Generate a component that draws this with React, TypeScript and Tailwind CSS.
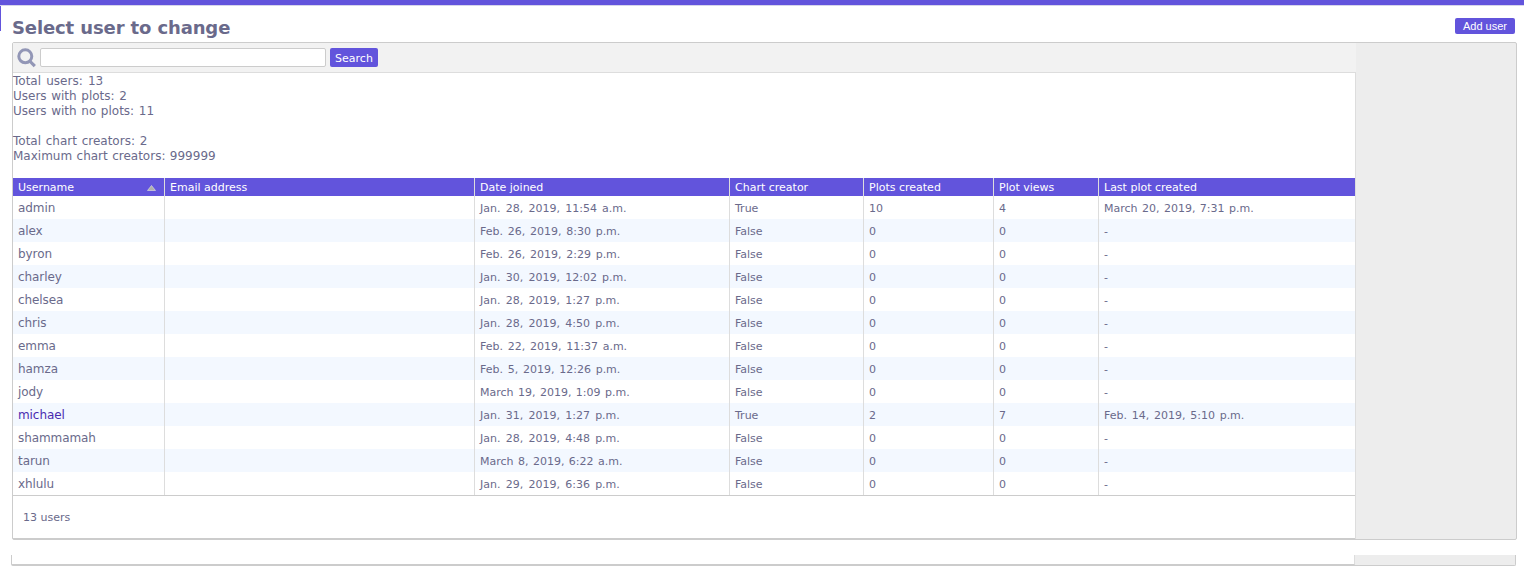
import React from "react";

type Row = [string, string, string, string, string, string];

const rows: Row[] = [
  ["admin", "Jan. 28, 2019, 11:54 a.m.", "True", "10", "4", "March 20, 2019, 7:31 p.m."],
  ["alex", "Feb. 26, 2019, 8:30 p.m.", "False", "0", "0", "-"],
  ["byron", "Feb. 26, 2019, 2:29 p.m.", "False", "0", "0", "-"],
  ["charley", "Jan. 30, 2019, 12:02 p.m.", "False", "0", "0", "-"],
  ["chelsea", "Jan. 28, 2019, 1:27 p.m.", "False", "0", "0", "-"],
  ["chris", "Jan. 28, 2019, 4:50 p.m.", "False", "0", "0", "-"],
  ["emma", "Feb. 22, 2019, 11:37 a.m.", "False", "0", "0", "-"],
  ["hamza", "Feb. 5, 2019, 12:26 p.m.", "False", "0", "0", "-"],
  ["jody", "March 19, 2019, 1:09 p.m.", "False", "0", "0", "-"],
  ["michael", "Jan. 31, 2019, 1:27 p.m.", "True", "2", "7", "Feb. 14, 2019, 5:10 p.m."],
  ["shammamah", "Jan. 28, 2019, 4:48 p.m.", "False", "0", "0", "-"],
  ["tarun", "March 8, 2019, 6:22 a.m.", "False", "0", "0", "-"],
  ["xhlulu", "Jan. 29, 2019, 6:36 p.m.", "False", "0", "0", "-"],
];

const headings = ["Email address", "Date joined", "Chart creator", "Plots created", "Plot views", "Last plot created"];

const columns = "grid grid-cols-[152px_310px_255px_134px_130px_105px_256px]";

function wordGap(value: string) {
  if (value.startsWith("Jan")) return "[word-spacing:1.75px]";
  if (value.startsWith("Feb")) return "[word-spacing:1.25px]";
  if (value.startsWith("March")) return "[word-spacing:0.95px]";
  return "";
}

function Toolbar() {
  return (
    <div className="flex h-[30px] w-[1343px] items-center border-b border-[#ddd] bg-[#f2f2f2] pl-1">
      <svg className="h-5 w-5 shrink-0" viewBox="0 0 20 20" fill="none" stroke="#9296b6">
        <circle cx="8.3" cy="8.3" r="6.5" strokeWidth="3" />
        <path d="M12.7 13 L17.8 18.2" strokeWidth="3.2" />
      </svg>
      <input
        aria-label="Search users"
        className="ml-[3px] h-[19px] w-[286px] rounded-[2px] border border-[#ccc] bg-white px-1 outline-none"
      />
      <button className="ml-1 h-[19px] w-12 rounded-[2px] bg-[#6254dc] text-center text-[11px] leading-[21px] text-white">
        Search
      </button>
    </div>
  );
}

function UserTable() {
  return (
    <div className="text-[11px]">
      <div className={`${columns} h-[18px] bg-[#6254dc] leading-[20px] text-white`}>
        <div className="flex items-center justify-between border-r border-[#ddd] pr-[8px] pl-[5px]">
          <span>Username</span>
          <svg className="h-[6px] w-[9px]" viewBox="0 0 9 6">
            <path d="M4.5 .5 L8.5 5.5 H.5 Z" fill="#b0b0ac" stroke="#e4e4e4" strokeWidth=".6" />
          </svg>
        </div>
        {headings.map((h, i) => (
          <div key={h} className={`h-[18px] pl-[5px] ${i < 5 ? "border-r border-[#ddd]" : ""}`}>
            {h}
          </div>
        ))}
      </div>
      {rows.map(([name, ...values], i) => (
        <div key={name} className={`${columns} h-[23px] leading-[26px] ${i % 2 ? "bg-[#f3f8ff]" : "bg-white"}`}>
          <div
            className={`h-[23px] border-r border-[#ddd] pl-[5px] text-[12px] leading-6 tracking-[-0.08px] ${
              name === "michael" ? "text-[#4a2bb0]" : ""
            }`}
          >
            {name}
          </div>
          <div className="border-r border-[#ddd]" />
          {values.map((v, j) => (
            <div key={j} className={`h-[23px] pl-[5px] ${wordGap(v)} ${j < 4 ? "border-r border-[#ddd]" : ""}`}>
              {v}
            </div>
          ))}
        </div>
      ))}
    </div>
  );
}

export default function App() {
  return (
    <div className="h-[581px] w-[1524px] overflow-hidden bg-white font-['DejaVu_Sans',sans-serif] text-[#6a6a8b]">
      <div className="h-[5px] bg-[#6254dc]" />
      <header className="flex h-[37px] border-t border-[#d6d5ea]">
        <div className="h-[25px] w-px bg-[#6254dc]" />
        <h1 className="mt-[11px] ml-[11px] text-[18px] leading-[22px] font-bold tracking-[-0.12px]">
          Select user to change
        </h1>
        <button className="mt-3 mr-[9px] ml-auto h-4 w-[60px] rounded-[2px] bg-[#6254dc] text-center font-['Liberation_Sans',sans-serif] text-[11px] leading-4 text-white">
          Add user
        </button>
      </header>
      <main className="ml-3 h-[498px] w-[1505px] rounded-[2px] border border-[#ccc] bg-[#ededed]">
        <Toolbar />
        <section className="h-[466px] w-[1343px] border-r border-[#ddd] bg-white">
          <div className="h-[105px] pt-px text-[12px] leading-[15px]">
            <p className="[word-spacing:1.4px]">Total users: 13</p>
            <p className="[word-spacing:0.8px]">Users with plots: 2</p>
            <p className="[word-spacing:0.8px]">Users with no plots: 11</p>
            <p className="mt-[15px] [word-spacing:0.9px]">Total chart creators: 2</p>
            <p className="[word-spacing:0.6px]">Maximum chart creators: 999999</p>
          </div>
          <UserTable />
          <div className="h-11 border-t border-b border-[#ccc] pt-[14px] pl-[10px] text-[11px] leading-4">13 users</div>
        </section>
      </main>
      <footer className="mt-[15px] ml-[11px] flex h-[11px] w-[1505px] rounded-b-[2px] border-x border-b border-[#ccc] bg-[#ededed]">
        <div className="h-[10px] w-[1343px] border-r border-b border-r-[#ddd] border-b-[#ccc] bg-white" />
      </footer>
    </div>
  );
}
